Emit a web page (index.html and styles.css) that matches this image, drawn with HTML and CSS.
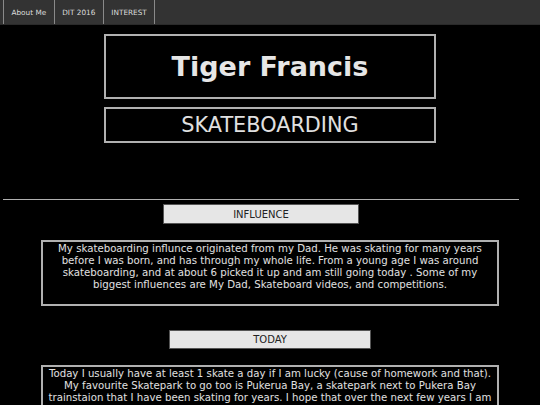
FILE: index.html
```html
<!DOCTYPE html>
<html>
<head>
<meta charset="utf-8">
<link rel="stylesheet" href="styles.css">
</head>
<body>
<nav class="topnav">
  <a class="navlink">About Me</a>
  <a class="navlink">DIT 2016</a>
  <a class="navlink">INTEREST</a>
</nav>
<header class="head">
  <div class="titlebox"><h1 class="title">Tiger Francis</h1></div>
  <div class="subbox"><h2 class="subtitle">SKATEBOARDING</h2></div>
</header>
<hr class="rule">
<section class="section">
  <div class="label label-influence">INFLUENCE</div>
  <div class="textbox textbox-first">My skateboarding influnce originated from my Dad. He was skating for many years before I was born, and has through my whole life. From a young age I was around skateboarding, and at about 6 picked it up and am still going today . Some of my biggest influences are My Dad, Skateboard videos, and competitions.</div>
</section>
<section class="section">
  <div class="label label-today">TODAY</div>
  <div class="textbox">Today I usually have at least 1 skate a day if I am lucky (cause of homework and that). My favourite Skatepark to go too is Pukerua Bay, a skatepark next to Pukera Bay trainstaion that I have been skating for years. I hope that over the next few years I am able to get much better at skateboarding and hopefully start making a name for myself in the skateboarding scene.</div>
</section>
</body>
</html>
```

FILE: styles.css
```css
html, body {
  margin: 0;
  padding: 0;
  background: #000;
  font-family: "DejaVu Sans", Verdana, sans-serif;
  color: #e0e0e0;
}
.topnav {
  display: flex;
  height: 24px;
  padding-left: 3px;
  background: #333;
  border-bottom: 1px solid #2a2a2a;
}
.navlink {
  display: flex;
  align-items: center;
  padding: 0 7.5px;
  font-size: 7.3px;
  color: #ddd;
  border: 1px solid #8a8a8a;
  border-top: none;
  border-bottom: none;
  margin-right: -1px;
}
.head {
  display: flex;
  flex-direction: column;
  align-items: center;
  gap: 8px;
  margin-top: 9px;
}
.titlebox {
  width: 328px;
  height: 61px;
  border: 2px solid #b0b0b0;
  display: flex;
  align-items: center;
  justify-content: center;
}
.title {
  margin: 0;
  font-size: 27px;
  font-weight: bold;
  color: #e6e6e6;
}
.subbox {
  width: 328px;
  height: 32px;
  border: 2px solid #b0b0b0;
  display: flex;
  align-items: center;
  justify-content: center;
}
.subtitle {
  margin: 0;
  font-size: 20.8px;
  font-weight: normal;
  color: #e0e0e0;
}
.rule {
  margin: 56px 21px 0 3px;
  border: none;
  border-top: 1px solid #b0b0b0;
  height: 0;
}
.section {
  display: flex;
  flex-direction: column;
  align-items: center;
}
.label {
  height: 18px;
  background: #e6e6e6;
  border: 1px solid #555;
  color: #222;
  font-size: 10px;
  display: flex;
  align-items: center;
  justify-content: center;
}
.label-influence {
  width: 194px;
  margin: 4px 18px 0 0;
}
.label-today {
  width: 200px;
  height: 17px;
  margin-top: 24px;
}
.textbox {
  width: 446px;
  margin-top: 16px;
  padding: 1px 4px 13px;
  border: 2px solid #b0b0b0;
  font-size: 10.2px;
  line-height: 12px;
  text-align: center;
  color: #e0e0e0;
}
```
